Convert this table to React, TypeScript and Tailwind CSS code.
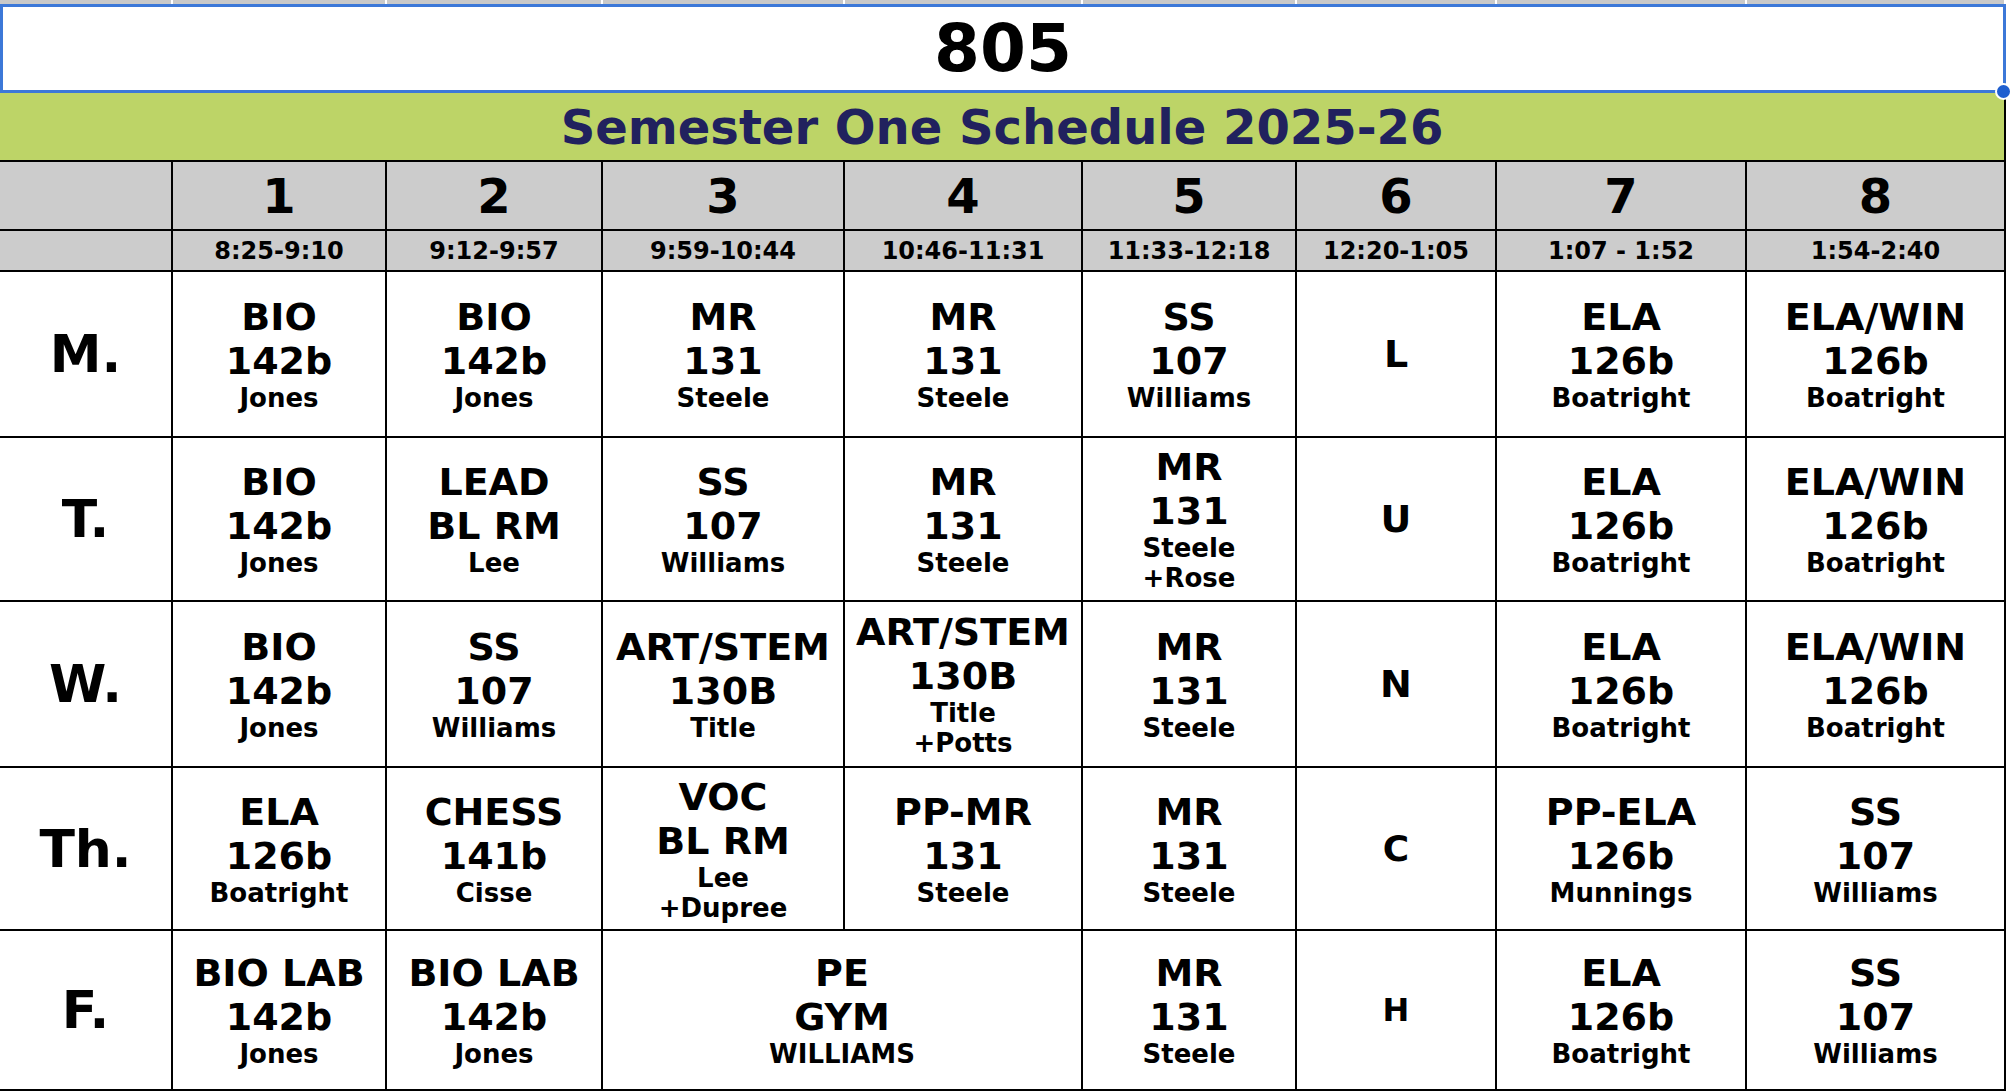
import { Fragment } from "react";

const cols =
  "grid-cols-[171px_212px_214px_240px_236px_212px_198px_248px_257px]";

type Cell = { top: string[]; sub: string[]; span?: boolean };

const periods = [
  { n: "1", t: "8:25-9:10" },
  { n: "2", t: "9:12-9:57" },
  { n: "3", t: "9:59-10:44" },
  { n: "4", t: "10:46-11:31" },
  { n: "5", t: "11:33-12:18" },
  { n: "6", t: "12:20-1:05" },
  { n: "7", t: "1:07 - 1:52" },
  { n: "8", t: "1:54-2:40" },
];

const c = (a: string, b: string, ...sub: string[]): Cell => ({ top: [a, b], sub });

// cells before lunch go in `am`, the two after it in `pm`
const days: { label: string; lunch: string; lunchSize: string; am: Cell[]; pm: Cell[] }[] = [
  {
    label: "M.",
    lunch: "L",
    lunchSize: "text-[38px]",
    am: [
      c("BIO", "142b", "Jones"),
      c("BIO", "142b", "Jones"),
      c("MR", "131", "Steele"),
      c("MR", "131", "Steele"),
      c("SS", "107", "Williams"),
    ],
    pm: [c("ELA", "126b", "Boatright"), c("ELA/WIN", "126b", "Boatright")],
  },
  {
    label: "T.",
    lunch: "U",
    lunchSize: "text-[38px]",
    am: [
      c("BIO", "142b", "Jones"),
      c("LEAD", "BL RM", "Lee"),
      c("SS", "107", "Williams"),
      c("MR", "131", "Steele"),
      c("MR", "131", "Steele", "+Rose"),
    ],
    pm: [c("ELA", "126b", "Boatright"), c("ELA/WIN", "126b", "Boatright")],
  },
  {
    label: "W.",
    lunch: "N",
    lunchSize: "text-[38px]",
    am: [
      c("BIO", "142b", "Jones"),
      c("SS", "107", "Williams"),
      c("ART/STEM", "130B", "Title"),
      c("ART/STEM", "130B", "Title", "+Potts"),
      c("MR", "131", "Steele"),
    ],
    pm: [c("ELA", "126b", "Boatright"), c("ELA/WIN", "126b", "Boatright")],
  },
  {
    label: "Th.",
    lunch: "C",
    lunchSize: "text-[36px]",
    am: [
      c("ELA", "126b", "Boatright"),
      c("CHESS", "141b", "Cisse"),
      c("VOC", "BL RM", "Lee", "+Dupree"),
      c("PP-MR", "131", "Steele"),
      c("MR", "131", "Steele"),
    ],
    pm: [c("PP-ELA", "126b", "Munnings"), c("SS", "107", "Williams")],
  },
  {
    label: "F.",
    lunch: "H",
    lunchSize: "text-[32px]",
    am: [
      c("BIO LAB", "142b", "Jones"),
      c("BIO LAB", "142b", "Jones"),
      { ...c("PE", "GYM", "WILLIAMS"), span: true },
      c("MR", "131", "Steele"),
    ],
    pm: [c("ELA", "126b", "Boatright"), c("SS", "107", "Williams")],
  },
];

function ClassCell({ cell }: { cell: Cell }) {
  return (
    <div
      className={`bg-white flex flex-col items-center justify-center text-center ${
        cell.span ? "col-span-2" : ""
      }`}
    >
      {cell.top.map((line, i) => (
        <div key={i} className="text-[38px] leading-[44px] whitespace-nowrap">
          {line}
        </div>
      ))}
      {cell.sub.map((line, i) => (
        <div key={i} className="text-[26px] leading-[30px] whitespace-nowrap">
          {line}
        </div>
      ))}
    </div>
  );
}

export default function App() {
  return (
    <div className="w-[2010px] h-[1092px] overflow-hidden bg-white text-black font-bold font-['DejaVu_Sans','Liberation_Sans',sans-serif]">
      {/* row above, cut off */}
      <div className={`grid ${cols} gap-[2px] h-[4px] w-[2006px] bg-white`}>
        {Array.from({ length: 9 }).map((_, i) => (
          <div key={i} className="bg-[#c9c9c9]" />
        ))}
      </div>

      {/* selected room number cell */}
      <div className="relative w-[2006px] h-[89px] border-[3px] border-[#3c78d8] flex items-center justify-center">
        <span className="text-[66px] leading-none">805</span>
        <span className="absolute -right-[9px] -bottom-[10px] w-[17px] h-[17px] rounded-full bg-[#1f5fcf] border-2 border-white" />
      </div>

      <div className="w-[2006px] h-[67px] bg-[#bdd467] border-r-2 border-black flex items-center justify-center">
        <span className="text-[48px] leading-none text-[#21215e]">
          Semester One Schedule 2025-26
        </span>
      </div>

      <div className={`grid ${cols} grid-rows-[67px_39px_164px_162px_164px_161px_158px] gap-[2px] w-[2006px] bg-black pt-[2px] pb-[2px] pr-[2px]`}>
        <div className="bg-[#cccccc]" />
        {periods.map((p) => (
          <div key={p.n} className="bg-[#cccccc] flex items-center justify-center text-[48px] leading-none">
            {p.n}
          </div>
        ))}
        <div className="bg-[#cccccc]" />
        {periods.map((p) => (
          <div key={p.t} className="bg-[#cccccc] flex items-center justify-center text-[24px] leading-none whitespace-nowrap">
            {p.t}
          </div>
        ))}

        {days.map((d) => (
          <Fragment key={d.label}>
            <div className="bg-white flex items-center justify-center text-[52px] leading-none">
              {d.label}
            </div>
            {d.am.map((cell, i) => (
              <ClassCell key={i} cell={cell} />
            ))}
            <div className={`bg-white flex items-center justify-center leading-none ${d.lunchSize}`}>
              {d.lunch}
            </div>
            {d.pm.map((cell, i) => (
              <ClassCell key={"pm" + i} cell={cell} />
            ))}
          </Fragment>
        ))}
      </div>
    </div>
  );
}
